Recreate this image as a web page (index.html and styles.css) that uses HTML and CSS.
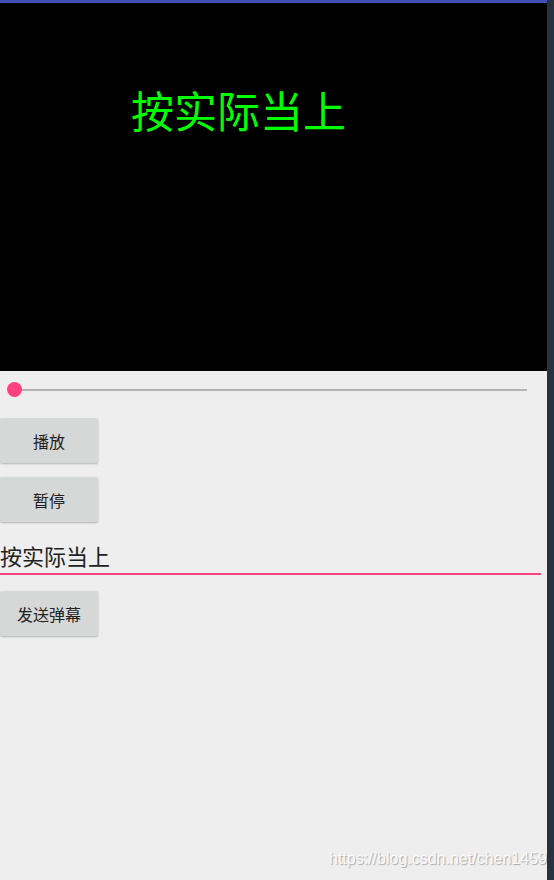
FILE: index.html
```html
<!DOCTYPE html>
<html lang="zh">
  <head>
    <meta charset="UTF-8">
    <meta name="viewport" content="width=device-width, initial-scale=1.0">
    <title>弹幕</title>
    <link rel="stylesheet" href="styles.css">
  </head>
  <body>
    <div class="screen">
      <div class="app">
        <div class="topbar"></div>
        <div class="video">
          <span class="danmaku">按实际当上</span>
        </div>
        <div class="controls">
          <div class="seekbar">
            <div class="track"></div>
            <div class="thumb"></div>
          </div>
          <button class="btn">播放</button>
          <button class="btn">暂停</button>
          <div class="edit">按实际当上</div>
          <button class="btn">发送弹幕</button>
        </div>
      </div>
      <div class="edge"></div>
    </div>
    <div class="watermark">https://blog.csdn.net/chen1459</div>
  </body>
</html>
```

FILE: styles.css
```css
html, body { margin: 0; height: 100%; }
body { font-family: "Noto Sans CJK SC", "Noto Sans", sans-serif; background: #eeeeee; overflow: hidden; position: relative; }
.screen { display: flex; height: 880px; }
.app { width: 547px; display: flex; flex-direction: column; background: #eeeeee; }
.edge { width: 7px; background: #28313e; }
.topbar { height: 3px; background: #3f51b5; }
.video { height: 368px; background: #000; position: relative; }
.danmaku { position: absolute; left: 131px; top: 76px; color: #00ff00; font-size: 43px; line-height: 1.4; white-space: nowrap; }
.controls { display: flex; flex-direction: column; align-items: flex-start; }
.seekbar { position: relative; width: 547px; height: 38px; margin-bottom: 9px; }
.track { position: absolute; left: 14px; right: 20px; top: 18px; height: 2px; background: #b3b3b3; }
.thumb { position: absolute; left: 7px; top: 11px; width: 15px; height: 15px; border-radius: 50%; background: #ff4081; }
.btn { font-family: inherit; font-size: 16px; color: #222; background: #d6d7d7; border: none; border-radius: 2px; width: 98px; height: 45px; padding: 0; margin-bottom: 14px; box-shadow: 0 1px 2px rgba(0,0,0,0.25); }
.edit { width: 541px; font-size: 22px; line-height: 32px; color: #222; border-bottom: 2px solid #ff4081; padding-bottom: 2px; margin-bottom: 16px; margin-top: 3px; }
.watermark { position: absolute; left: 329px; top: 850px; font-family: "Liberation Sans", Arial, sans-serif; font-size: 16px; color: #fafafa; text-shadow: 1px 1px 1px rgba(0,0,0,0.3); }
```
